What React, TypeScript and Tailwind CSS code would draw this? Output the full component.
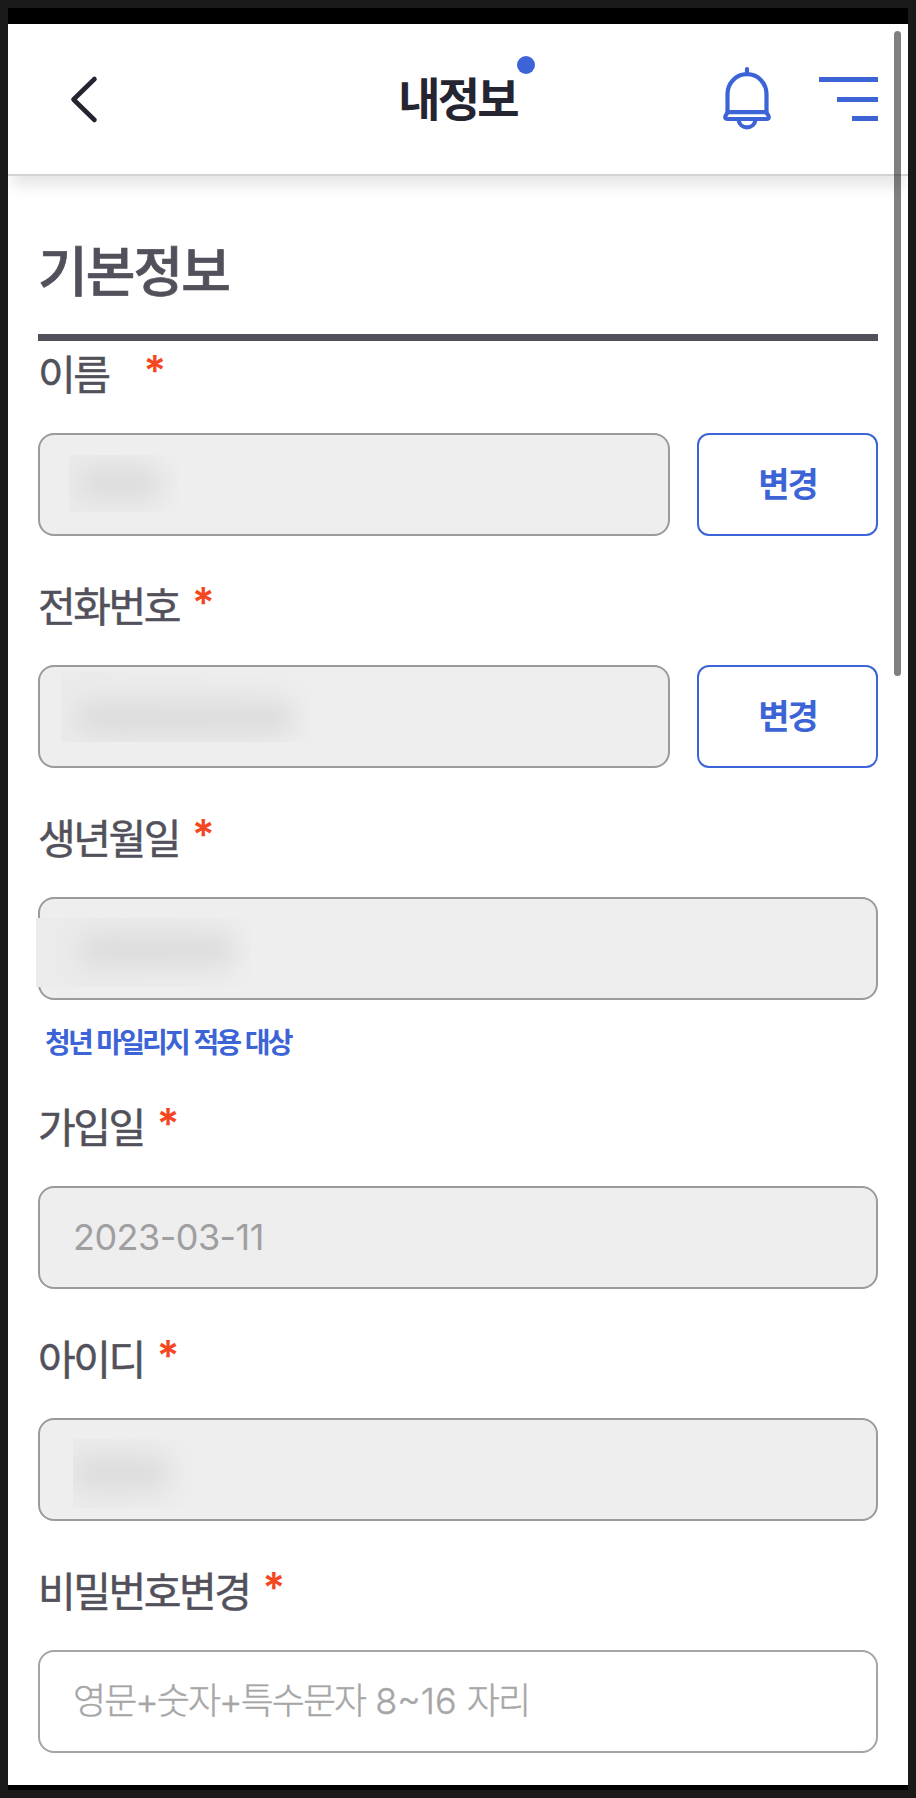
import type { ReactNode } from "react";

type FieldProps = {
  label: string;
  wideGap?: boolean;
  editable?: boolean;
  hint?: string;
  white?: boolean;
  children?: ReactNode;
};

function Field({ label, wideGap, editable, hint, white, children }: FieldProps) {
  return (
    <div>
      <div className="flex h-[66px] items-center pb-[4px] text-[41px] leading-none tracking-[-0.06em] text-[#52515b]">
        <label className="[-webkit-text-stroke:0.5px]">{label}</label>
        <span
          className={`-mt-0.5 font-['Inter',sans-serif] text-[42px] font-semibold tracking-normal text-[#f4471f] ${
            wideGap ? "ml-[35px]" : "ml-[13px]"
          }`}
        >
          *
        </span>
      </div>
      <div className="mt-[26px] flex h-[103px] gap-[27px]">
        <div
          className={`relative flex flex-1 items-center rounded-2xl border-2 pb-px pl-[33px] font-['Inter','Noto_Sans_CJK_KR',sans-serif] text-[36px] whitespace-pre ${
            white
              ? "border-[#a5a5a8] bg-white font-light text-[#a6a6a6] [-webkit-text-stroke:0.4px]"
              : "border-[#9b9b9e] bg-[#eeeeee] tracking-[-0.015em] text-[#9f9fa1]"
          }`}
        >
          {children}
        </div>
        {editable && (
          <button className="w-[181px] rounded-xl border-2 border-[#3c64d6] pb-1 text-[34px] font-bold tracking-[-0.06em] text-[#3c64d6]">
            변경
          </button>
        )}
      </div>
      {hint ? (
        <p className="flex h-[94px] items-start pt-[24px] pl-[7px] text-[28px] leading-[34px] font-bold tracking-[-0.102em] [word-spacing:2px] whitespace-pre text-[#3c64d6]">
          {hint}
        </p>
      ) : (
        <div className="h-[37px]" />
      )}
    </div>
  );
}

// Blurred patch that hides a personal value
function Masked({ box, blob }: { box: string; blob: string }) {
  return (
    <div className={`absolute overflow-hidden bg-linear-to-r from-[#ebebeb] to-[#eeeeee] ${box}`}>
      <div className={`absolute rounded-full bg-[#dcdcdc] blur-[13px] ${blob}`} />
    </div>
  );
}

function Header() {
  return (
    <header className="relative flex h-[152px] shrink-0 items-center justify-between border-b-2 border-[#d3d3d3] bg-white pr-[30px] pl-[60px] shadow-[0_14px_14px_-4px_rgba(0,0,0,0.1)]">
      <button className="w-[120px]">
        <svg width="32" height="52" viewBox="0 0 32 52" fill="none">
          <path
            d="M26.5 6 L5.5 26.5 L26.5 47"
            stroke="#252531"
            strokeWidth="4.6"
            strokeLinecap="round"
            strokeLinejoin="round"
          />
        </svg>
      </button>
      <h1 className="relative mb-[6px] ml-[7px] text-[46px] leading-none font-bold tracking-[-0.06em] text-[#252531]">
        내정보
        <span className="absolute -top-[17px] -right-[18px] h-[18px] w-[18px] rounded-full bg-[#3c64d6]" />
      </h1>
      <div className="flex items-center gap-[45px]">
        <svg className="mb-[2px]" width="54" height="68" viewBox="0 0 54 68" fill="none" stroke="#3c64d6" strokeWidth="4.2">
          <path d="M27 5 V10" strokeLinecap="round" />
          <path d="M7.5 48 V29.7 A19.4 19.4 0 0 1 46.5 29.7 V48" />
          <path
            d="M7.5 48.2 H46.5 C47 50.2 48.8 51 48.8 53 Q48.8 55 46.5 55 H7.5 Q5.2 55 5.2 53 C5.2 51 7 50.2 7.5 48.2 Z"
            strokeLinejoin="round"
          />
          <path d="M18.5 56 A8.6 8.6 0 0 0 35.5 56" />
        </svg>
        <div className="flex flex-col items-end gap-[14.4px]">
          <div className="h-[5px] w-[59px] bg-[#3c64d6]" />
          <div className="h-[5px] w-[41px] bg-[#3c64d6]" />
          <div className="h-[5px] w-[26px] bg-[#3c64d6]" />
        </div>
      </div>
    </header>
  );
}

export default function App() {
  return (
    <div className="h-[1798px] w-[916px] bg-[#191919] p-2 font-['Noto_Sans_CJK_KR',sans-serif]">
      <div className="relative flex h-[1782px] flex-col overflow-hidden bg-black pt-4 pb-[5px]">
        <div className="flex flex-1 flex-col overflow-hidden bg-white">
          <Header />

          <main className="px-[30px]">
            <h2 className="flex h-[165px] items-center border-b-[7px] border-[#52515b] pt-[27px] text-[54px] leading-none font-medium tracking-[-0.035em] text-[#52515b] [-webkit-text-stroke:0.7px]">
              기본정보
            </h2>

            <Field label="이름" wideGap editable>
              <Masked box="left-[29px] top-[20px] h-[57px] w-[110px]" blob="left-2 top-2.5 h-9 w-[86px]" />
            </Field>
            <Field label="전화번호" editable>
              <Masked box="left-[21px] top-[5px] h-[70px] w-[250px]" blob="left-[14px] top-[28px] h-9 w-[220px]" />
            </Field>
            <Field label="생년월일" hint="청년 마일리지 적용 대상">
              <Masked box="-left-[4px] top-[19px] h-[69px] w-[215px]" blob="left-[42px] top-[14px] h-9 w-[158px]" />
            </Field>
            <Field label="가입일">2023-03-11</Field>
            <Field label="아이디">
              <Masked box="left-[33px] top-[19px] h-[69px] w-[122px]" blob="left-0 top-4 h-9 w-[98px]" />
            </Field>
            <Field label="비밀번호변경" white>
              <span className="tracking-[-0.055em]">영문+숫자+특수문자</span> 8~16{" "}
              <span className="tracking-[-0.055em]">자리</span>
            </Field>
          </main>
        </div>

        {/* Scrollbar */}
        <div className="absolute top-[23px] right-[7px] h-[645px] w-[7px] rounded-full bg-black/50" />
      </div>
    </div>
  );
}
